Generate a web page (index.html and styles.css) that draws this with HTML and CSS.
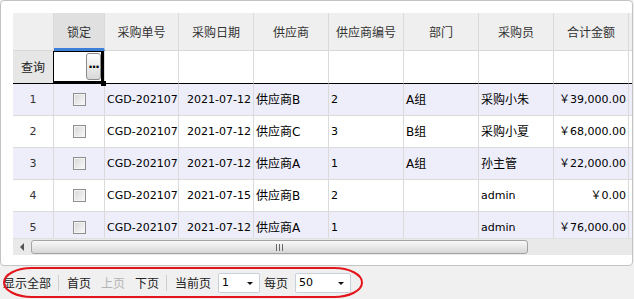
FILE: index.html
```html
<!DOCTYPE html>
<html lang="zh">
<head>
<meta charset="utf-8">
<link rel="stylesheet" href="styles.css">
</head>
<body>
<div class="panel">
  <div class="grid">
    <div class="row head">
      <div class="c c0"></div>
      <div class="c sel">锁定</div>
      <div class="c">采购单号</div>
      <div class="c">采购日期</div>
      <div class="c">供应商</div>
      <div class="c">供应商编号</div>
      <div class="c">部门</div>
      <div class="c">采购员</div>
      <div class="c">合计金额</div>
      <div class="c"></div>
    </div>
    <div class="row filter">
      <div class="c c0">查询</div>
      <div class="c fsel"><div class="selbox"><span class="btn">···</span><span class="handle"></span></div></div>
      <div class="c"></div>
      <div class="c"></div>
      <div class="c"></div>
      <div class="c"></div>
      <div class="c"></div>
      <div class="c"></div>
      <div class="c"></div>
      <div class="c"></div>
    </div>
    <div class="row d odd">
      <div class="c c0 n">1</div>
      <div class="c ck"><span class="box"></span></div>
      <div class="c n">CGD-202107</div>
      <div class="c n r">2021-07-12</div>
      <div class="c">供应商B</div>
      <div class="c n">2</div>
      <div class="c">A组</div>
      <div class="c">采购小朱</div>
      <div class="c n r">￥39,000.00</div>
      <div class="c"></div>
    </div>
    <div class="row d">
      <div class="c c0 n">2</div>
      <div class="c ck"><span class="box"></span></div>
      <div class="c n">CGD-202107</div>
      <div class="c n r">2021-07-12</div>
      <div class="c">供应商C</div>
      <div class="c n">3</div>
      <div class="c">B组</div>
      <div class="c">采购小夏</div>
      <div class="c n r">￥68,000.00</div>
      <div class="c"></div>
    </div>
    <div class="row d odd">
      <div class="c c0 n">3</div>
      <div class="c ck"><span class="box"></span></div>
      <div class="c n">CGD-202107</div>
      <div class="c n r">2021-07-12</div>
      <div class="c">供应商A</div>
      <div class="c n">1</div>
      <div class="c">A组</div>
      <div class="c">孙主管</div>
      <div class="c n r">￥22,000.00</div>
      <div class="c"></div>
    </div>
    <div class="row d">
      <div class="c c0 n">4</div>
      <div class="c ck"><span class="box"></span></div>
      <div class="c n">CGD-202107</div>
      <div class="c n r">2021-07-15</div>
      <div class="c">供应商B</div>
      <div class="c n">2</div>
      <div class="c"></div>
      <div class="c n">admin</div>
      <div class="c n r">￥0.00</div>
      <div class="c"></div>
    </div>
    <div class="row d odd">
      <div class="c c0 n">5</div>
      <div class="c ck"><span class="box"></span></div>
      <div class="c n">CGD-202107</div>
      <div class="c n r">2021-07-12</div>
      <div class="c">供应商A</div>
      <div class="c n">1</div>
      <div class="c"></div>
      <div class="c n">admin</div>
      <div class="c n r">￥76,000.00</div>
      <div class="c"></div>
    </div>
  </div>
  <div class="hs">
    <span class="arr"><span class="tri"></span></span>
    <span class="thumb"><span class="grip"></span></span>
  </div>
</div>
<div class="pager">
  <span class="pi">显示全部</span>
  <span class="sep"></span>
  <span class="pi m10">首页</span>
  <span class="pi dis m10">上页</span>
  <span class="pi">下页</span>
  <span class="sep"></span>
  <span class="pi m7">当前页</span>
  <span class="sel1 w42"><span class="v">1</span><span class="dd"></span></span>
  <span class="pi m7">每页</span>
  <span class="sel1 w56"><span class="v">50</span><span class="dd"></span></span>
</div>
<svg class="ring" width="370" height="33" viewBox="0 0 370 33"><rect x="4" y="2" width="358" height="29" rx="28" ry="14.5" fill="none" stroke="#e4141b" stroke-width="2"/></svg>
</body>
</html>
```
FILE: styles.css
```css
* { box-sizing: border-box; }
html, body { margin: 0; padding: 0; }
body {
  width: 634px;
  height: 299px;
  overflow: hidden;
  position: relative;
  background: #f0f0f0;
  font-family: "DejaVu Sans", "Noto Sans CJK SC", sans-serif;
  font-size: 12px;
  color: #000;
}
.panel {
  width: 633px;
  height: 266px;
  background: #fff;
  border: 1px solid #c3c3c3;
  border-radius: 4px;
  padding: 12px 0 10px 12px;
}
.grid { height: 225px; overflow: hidden; }
.row {
  display: grid;
  grid-template-columns: 41px 51px 74px repeat(6, 75px) 1fr;
}
.c {
  border-right: 1px solid #dadada;
  border-bottom: 1px solid #dadada;
  display: flex;
  align-items: center;
  padding: 0 2px;
  white-space: nowrap;
  overflow: hidden;
  line-height: 14px;
}
.head .c {
  height: 38px;
  background: #efefef;
  justify-content: center;
  color: #333;
  font-family: "Noto Sans CJK SC", sans-serif;
  border-bottom-color: #d8d8d8;
}
.head .sel {
  background: #e0e0e0;
  border-bottom: 3px solid #3d7fd6;
  padding-top: 2px;
}
.filter .c { height: 33px; border-bottom: 1px solid #000; }
.filter .c0 {
  background: #e6e6e6;
  justify-content: center;
  color: #222;
  font-family: "Noto Sans CJK SC", sans-serif;
}
.fsel { position: relative; overflow: visible; z-index: 2; }
.selbox {
  position: absolute;
  left: -1px;
  top: 0;
  width: 51px;
  height: 33px;
  border: 1px solid #000;
  border-right-width: 3px;
  border-bottom-width: 3px;
}
.btn {
  position: absolute;
  right: 0;
  top: 1px;
  width: 15px;
  height: 27px;
  border: 1px solid #8c8c8c;
  border-radius: 3px;
  background: linear-gradient(#fefefe, #d9d9d9);
  display: flex;
  align-items: center;
  justify-content: center;
  font-weight: bold;
  font-size: 12px;
  letter-spacing: -1px;
  line-height: 1;
}
.handle {
  position: absolute;
  left: 100%;
  top: 100%;
  width: 5px;
  height: 5px;
  background: #000;
}
.d .c { height: 32px; }
.odd .c { background: #eeeefb; }
.c0 { justify-content: center; color: #333; }
.n { font-size: 11px; }
.r { justify-content: flex-end; padding-right: 2px; }
.ck { justify-content: center; }
.box {
  width: 13px;
  height: 13px;
  border: 1px solid #8e8f8f;
  background: linear-gradient(135deg, #d6d6d6, #fafafa);
  box-shadow: inset 0 0 0 1px #f4f4f4;
  margin-left: 1px;
}
.hs {
  position: relative;
  height: 17px;
  background: #e9e9e9;
  border-top: 1px solid #e0e0e0;
}
.arr {
  position: absolute;
  left: 0;
  top: 0;
  width: 18px;
  height: 16px;
  display: flex;
  align-items: center;
  justify-content: center;
}
.tri {
  width: 0;
  height: 0;
  border-right: 4px solid #555;
  border-top: 4px solid transparent;
  border-bottom: 4px solid transparent;
}
.thumb {
  position: absolute;
  left: 18px;
  top: 1px;
  width: 497px;
  height: 14px;
  border: 1px solid #a3a3a3;
  border-radius: 3px;
  background: linear-gradient(#f9f9f9, #e8e8e8 50%, #d6d6d6);
}
.grip {
  position: absolute;
  left: 244px;
  top: 3px;
  width: 7px;
  height: 7px;
  background: linear-gradient(90deg, #666 1px, transparent 1px, transparent 3px, #666 3px, #666 4px, transparent 4px, transparent 6px, #666 6px);
}
.pager {
  height: 33px;
  display: flex;
  align-items: center;
  padding-left: 3px;
  color: #222;
  font-family: "Noto Sans CJK SC", sans-serif;
  font-size: 12px;
}
.pi { line-height: 16px; }
.dis { color: #b3b3b3; }
.m10 { margin-right: 10px; }
.m7 { margin-right: 7px; }
.sep {
  width: 1px;
  height: 16px;
  background: #cfcfcf;
  margin: 0 8px 0 7px;
}
.sel1 {
  position: relative;
  height: 20px;
  background: #fff;
  border: 1px solid #c8d0dc;
  border-radius: 2px;
  display: flex;
  align-items: center;
  padding-left: 3px;
  font-family: "DejaVu Sans", sans-serif;
  font-size: 11px;
  color: #000;
}
.w42 { width: 42px; margin-right: 4px; }
.w56 { width: 56px; }
.dd {
  position: absolute;
  right: 6px;
  top: 8px;
  width: 0;
  height: 0;
  border-top: 3px solid #111;
  border-left: 3px solid transparent;
  border-right: 3px solid transparent;
}
.ring { position: absolute; left: 0; top: 266px; }
```
